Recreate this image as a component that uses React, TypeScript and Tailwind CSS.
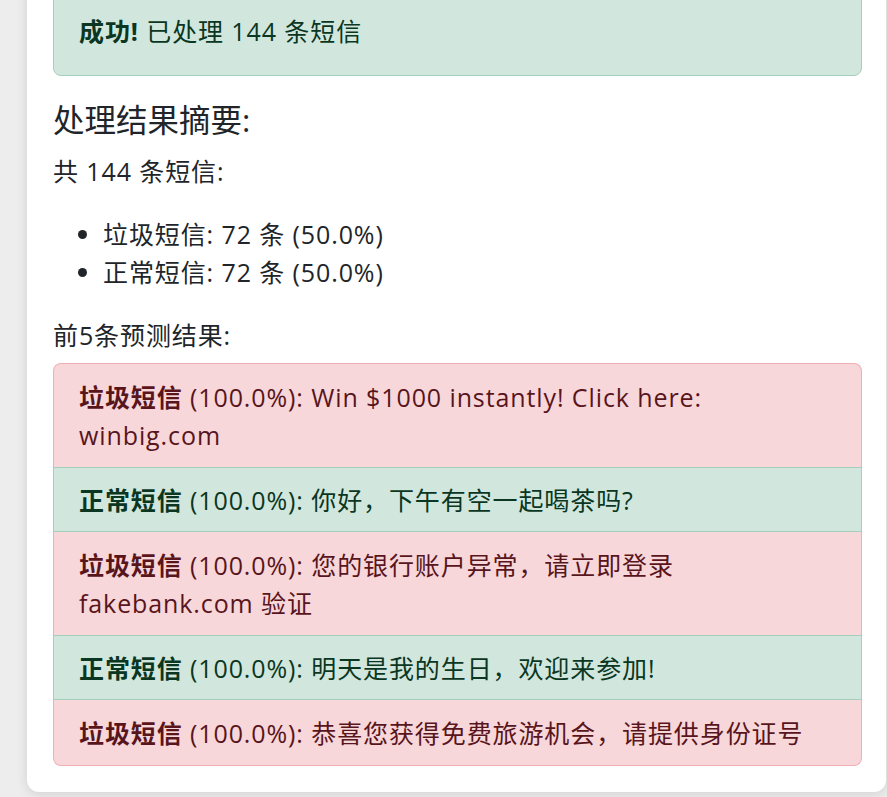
import React from "react";

const FONT = '"Open Sans", "Noto Sans CJK SC", sans-serif';

const results = [
  { spam: true, text: "Win $1000 instantly! Click here: winbig.com" },
  { spam: false, text: "你好，下午有空一起喝茶吗?" },
  { spam: true, text: "您的银行账户异常，请立即登录 fakebank.com 验证" },
  { spam: false, text: "明天是我的生日，欢迎来参加!" },
  { spam: true, text: "恭喜您获得免费旅游机会，请提供身份证号" },
];

function ResultItem({ spam, text, first, last }: { spam: boolean; text: string; first: boolean; last: boolean }) {
  const cls = spam
    ? "bg-[#f8d7da] text-[#58151c] border-x border-[#f1aeb5] py-[13.5px]"
    : "bg-[#d1e7dd] text-[#0a3622] border-y border-x border-[#a3cfbb] py-[12.5px]";
  return (
    <li className={`${cls} ${first ? "border-t rounded-t-[8px]" : ""} ${last ? "border-b rounded-b-[8px]" : ""} px-[25px]`}>
      <strong className="font-bold">{spam ? "垃圾短信" : "正常短信"}</strong> (100.0%): {text}
    </li>
  );
}

export default function App() {
  return (
    <div className="min-h-screen bg-[#ededed] overflow-hidden" style={{ fontFamily: FONT }}>
      <div className="ml-[27px] w-[859px] -mt-[40px] bg-white rounded-[12px] shadow-[0_2px_12px_rgba(0,0,0,0.12)] pl-[26px] pr-[24px] pt-[26px] pb-[26px] text-[25px] leading-[38px] tracking-[0.9px] text-[#212529]">
        {/* success alert */}
        <div className="bg-[#d1e7dd] border border-[#a3cfbb] text-[#0a3622] rounded-[8px] px-[25px] py-[25px] mb-[25px]">
          <strong className="font-bold">成功!</strong> 已处理 144 条短信
        </div>

        {/* summary */}
        <h5 className="text-[31.5px] leading-[38px] tracking-normal mb-[13px]">处理结果摘要:</h5>
        <p className="mb-[25px]">共 144 条短信:</p>
        <ul className="list-disc pl-[50px] mb-[25px]">
          <li>垃圾短信: 72 条 (50.0%)</li>
          <li>正常短信: 72 条 (50.0%)</li>
        </ul>

        <p className="mb-[9px]">前5条预测结果:</p>
        <ul>
          {results.map((r, i) => (
            <ResultItem key={i} spam={r.spam} text={r.text} first={i === 0} last={i === results.length - 1} />
          ))}
        </ul>
      </div>
    </div>
  );
}
